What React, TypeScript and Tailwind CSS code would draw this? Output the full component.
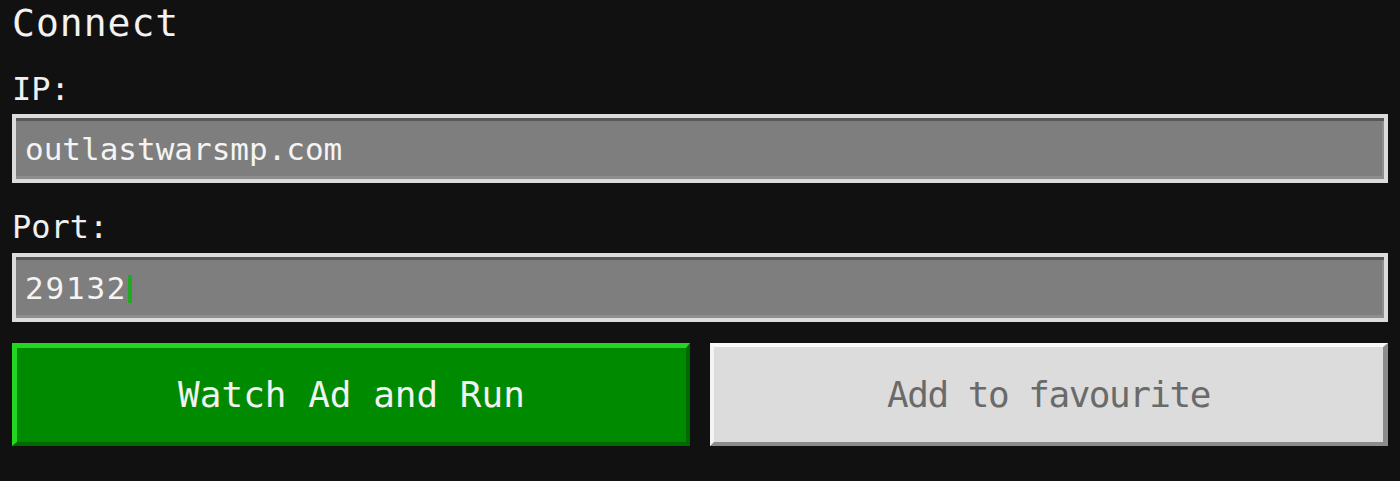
const font = "font-['DejaVu_Sans_Mono','Liberation_Mono',monospace]"

function Field({ value, cursor, wide }: { value: string; cursor?: boolean; wide?: boolean }) {
  return (
    <div className="h-[69px] border-4 border-[#dcdcdc] bg-[#7e7e7e] shadow-[inset_0_3px_0_#585858,inset_0_-3px_0_#8e8e8e,inset_-2px_0_0_#8e8e8e] pl-[9px] pt-[16px]">
      <div className="flex items-center h-[31px]">
        <span className={`${font} text-[31px] leading-[31px] text-[#f4f4f4] ${wide ? 'tracking-[1.8px]' : ''}`}>{value}</span>
        {cursor && <span className="shrink-0 ml-[1px] w-[4px] h-[28px] bg-[#22a822]" />}
      </div>
    </div>
  )
}

export default function App() {
  return (
    <div className={`${font} h-[481px] bg-[#111111] px-[12px] overflow-hidden`}>
      <div className="mt-[4px] text-[38px] leading-[38px] tracking-[1px] text-[#f2f2f2]">Connect</div>

      <div className="mt-[31px] text-[32px] leading-[32px] text-[#f0f0f0]">IP:</div>
      <div className="mt-[9px]">
        <Field value="outlastwarsmp.com" />
      </div>

      <div className="mt-[28px] text-[32px] leading-[32px] text-[#f0f0f0]">Port:</div>
      <div className="mt-[10px]">
        <Field value="29132" cursor wide />
      </div>

      <div className="mt-[21px] grid grid-cols-2 gap-[20px]">
        <button className="h-[103px] flex items-center justify-center bg-[#008a00] border-t-[5px] border-l-[5px] border-r-[4px] border-b-[4px] border-t-[#22d622] border-l-[#22d622] border-r-[#006a00] border-b-[#006a00] text-[36px] leading-[36px] text-[#f2f2f2]">
          Watch Ad and Run
        </button>
        <button className="h-[103px] flex items-center justify-center bg-[#dcdcdc] border-t-4 border-l-4 border-r-[5px] border-b-4 border-t-[#f8f8f8] border-l-[#f4f4f4] border-r-[#8c8c8c] border-b-[#8c8c8c] text-[36px] leading-[36px] tracking-[-1.5px] text-[#6a6a6a]">
          Add to favourite
        </button>
      </div>
    </div>
  )
}
